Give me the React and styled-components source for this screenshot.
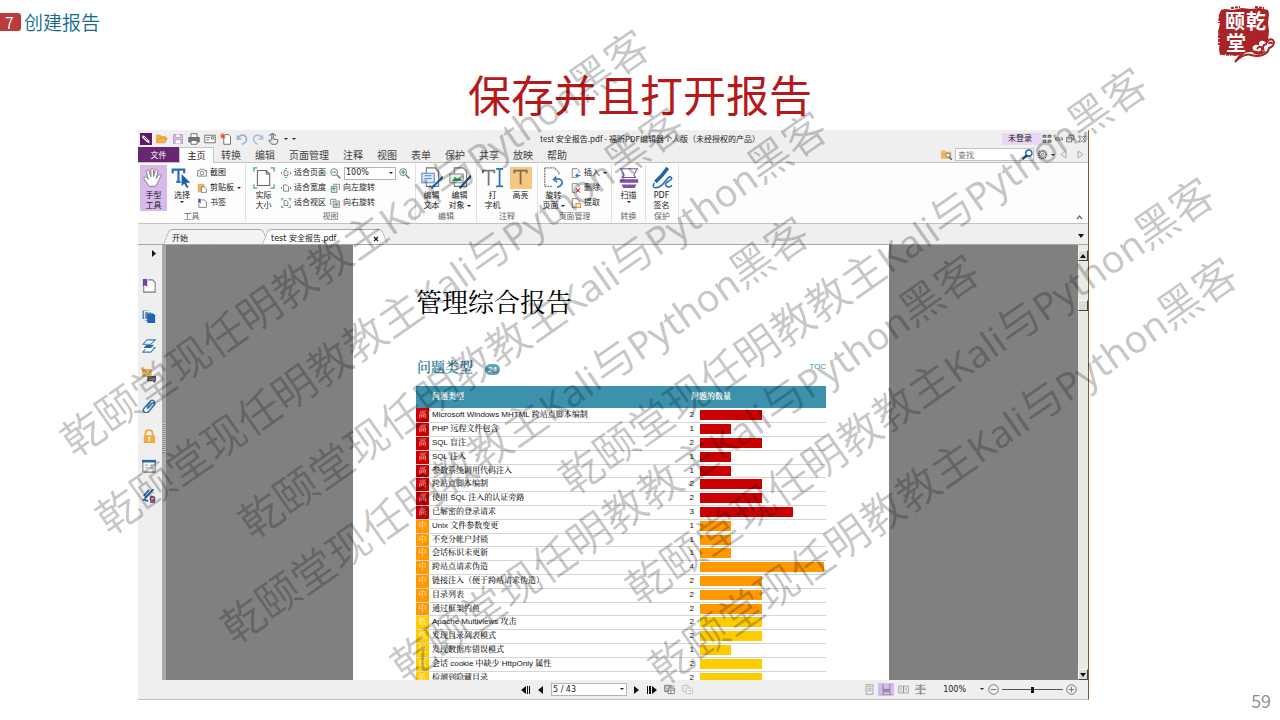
import React from 'react';
import styled, { createGlobalStyle, css } from 'styled-components';

const Global = createGlobalStyle`
  * { box-sizing: border-box; }
  body { margin: 0; background: #fff; }
  button, input, select { font: inherit; color: inherit; margin: 0; padding: 0; border: 0; background: none; border-radius: 0; }
  button, a { cursor: pointer; }
  svg { display: block; flex: none; }
`;

const cjk = '"Noto Sans CJK SC", sans-serif';
const line = '#c3c3c3';

/* ---------- slide ---------- */
const Slide = styled.main`
  position: relative;
  overflow: hidden;
  min-height: 100vh;
  display: flex;
  flex-direction: column;
  font-family: ${cjk};
`;
const SlideHeader = styled.header`
  display: flex;
  justify-content: space-between;
  align-items: flex-start;
  height: 64px;
  padding-right: 4px;
`;
const Chapter = styled.div`
  display: flex;
  align-items: center;
  gap: 3px;
  padding-top: 8px;
  font-size: 19px;
  line-height: 28px;
  font-weight: 350;
  color: #14698c;
`;
const ChapterNumber = styled.span`
  width: 21px;
  height: 18px;
  padding-left: 5px;
  border-radius: 0 3px 3px 0;
  background: #bd3a3a;
  color: #fff;
  font-size: 16px;
  line-height: 18px;
`;
const Title = styled.h1`
  margin: 0;
  height: 66px;
  text-align: center;
  font-size: 43px;
  line-height: 58px;
  font-weight: 400;
  color: #b5191c;
`;
const Stage = styled.div`
  flex: 1;
  display: grid;
  grid-template-columns: 138px minmax(0, 1fr) 191px;
  align-items: start;
`;
const SlideNumber = styled.footer`
  align-self: end;
  padding: 0 9px 7px 0;
  text-align: right;
  font-size: 18px;
  line-height: 26px;
  font-weight: 350;
  color: #8c8c8c;
`;
const Mark = styled.span`
  position: absolute;
  left: calc(50% + ${p => p.$x}px);
  top: ${p => p.$y}px;
  transform: translate(-50%, -50%) rotate(-35deg);
  white-space: nowrap;
  pointer-events: none;
  font-family: ${cjk};
  font-weight: 350;
  font-size: 43px;
  line-height: 60px;
  color: rgba(0, 0, 0, 0.24);
`;
const MarkLatin = styled.span`
  font-family: "Noto Sans", sans-serif;
  font-weight: 400;
  font-size: 38px;
`;

/* ---------- application window ---------- */
const Window = styled.section`
  grid-column: 2;
  display: flex;
  flex-direction: column;
  background: #efefef;
  border-right: 1px solid #7d5a3a;
  border-bottom: 1px solid ${line};
  font-family: "DejaVu Sans", ${cjk};
  font-size: 8px;
  line-height: 10px;
  color: #222;
`;
const TitleBar = styled.div`
  display: flex;
  align-items: center;
  height: 17px;
  padding: 0 2px;
`;
const QuickTools = styled.div`
  display: flex;
  align-items: center;
  gap: 4px;
  width: 158px;
`;
const IconButton = styled.button`
  display: flex;
  align-items: center;
  justify-content: center;
`;
const WindowTitle = styled.div`
  flex: 1;
  text-align: center;
  font-family: ${cjk};
`;
const SignIn = styled.button`
  width: 40px;
  height: 12px;
  padding-left: 6px;
  text-align: left;
  background: #ead6f5;
  white-space: nowrap;
`;
const WindowControls = styled.div`
  display: flex;
  align-items: center;
  gap: 3px;
`;
const MenuBar = styled.div`
  display: flex;
  align-items: stretch;
  height: 16px;
  border-bottom: 1px solid ${line};
  font-family: ${cjk};
  font-size: 10px;
  line-height: 14px;
  color: #444;
`;
const MenuItem = styled.button`
  padding: 0 7px;
  white-space: nowrap;
  ${p => p.$kind === 'file' && css`
    width: 41px;
    background: #6a2673;
    color: #fff;
    font-size: 8px;
  `}
  ${p => p.$kind === 'active' && css`
    width: 35px;
    margin: 0 0 -1px;
    background: #fdfdfd;
    border: 1px solid ${line};
    border-bottom: 0;
    font-size: 9px;
    color: #222;
  `}
`;
const Finder = styled.div`
  display: flex;
  align-items: center;
  gap: 3px;
  margin-left: auto;
  padding-right: 3px;
  font-size: 8px;
`;
const FindBox = styled.label`
  display: flex;
  align-items: center;
  width: 79px;
  height: 13px;
  padding-left: 2px;
  background: #fff;
  border: 1px solid ${line};
  input { flex: 1; min-width: 0; height: 11px; outline: 0; }
  input::placeholder { color: #777; opacity: 1; }
`;
const Caret = styled.span`
  flex: none;
  width: 0;
  height: 0;
  border: 2px solid transparent;
  border-top-color: #222;
  border-bottom-width: 0;
`;

/* ---------- ribbon ---------- */
const Ribbon = styled.div`
  display: flex;
  height: 61px;
  background: #fdfdfd;
  border-bottom: 1px solid ${line};
`;
const Group = styled.fieldset`
  display: flex;
  flex-direction: column;
  flex: none;
  width: ${p => p.$w}px;
  min-width: 0;
  margin: 1px 0;
  padding: 0;
  border: 0;
  border-right: 1px solid #e2e2e2;
`;
const GroupBody = styled.div`
  display: flex;
  gap: ${p => p.$gap || 0}px;
  height: 48px;
  padding-left: ${p => p.$pad || 0}px;
`;
const GroupName = styled.div`
  text-align: center;
  color: #666;
`;
const BigButton = styled.button`
  display: flex;
  flex-direction: column;
  align-items: center;
  width: ${p => p.$w || 27}px;
  height: 46px;
  margin-top: 1px;
  padding-top: 2px;
  white-space: nowrap;
  background: ${p => (p.$on ? '#d7b9ec' : 'none')};
  > svg { margin-bottom: 2px; }
`;
const WithCaret = styled.span`
  display: flex;
  align-items: center;
  gap: 2px;
`;
const Stack = styled.div`
  display: flex;
  flex-direction: column;
  gap: 5px;
  padding-top: 4px;
`;
const SmallButton = styled.button`
  display: flex;
  align-items: center;
  gap: 3px;
  height: 10px;
  white-space: nowrap;
`;
const ZoomLine = styled.div`
  display: flex;
  align-items: center;
  gap: 3px;
  height: 10px;
`;
const Combo = styled.span`
  position: relative;
  width: ${p => p.$w}px;
  height: 13px;
  background: ${p => (p.$plain ? 'none' : '#fff')};
  border: 1px solid ${p => (p.$plain ? 'transparent' : '#b4b4b4')};
  select { display: block; width: 100%; height: 11px; padding-left: 1px; appearance: none; }
  ${Caret} { position: absolute; right: 2px; top: 4px; pointer-events: none; }
`;
const Collapse = styled.button`
  margin: auto 5px 3px auto;
`;

/* ---------- document tabs ---------- */
const DocTabs = styled.div`
  display: flex;
  align-items: flex-end;
  height: 21px;
  padding-left: 28px;
  border-bottom: 1px solid #a8a8a8;
`;
const DocTab = styled.div`
  position: relative;
  z-index: 0;
  display: flex;
  align-items: center;
  justify-content: space-between;
  width: ${p => p.$w}px;
  height: 15px;
  padding: 4px 6px 0 6px;
  &::before, &::after {
    content: '';
    position: absolute;
    z-index: -1;
    top: 0;
    bottom: 0;
    border-top: 1px solid #aaa;
    background: ${p => (p.$active ? '#fdfdfd' : '#f3f3f3')};
  }
  &::before { left: 0; right: 50%; border-left: 1px solid #aaa; border-top-left-radius: 4px; transform: skewX(-22deg); }
  &::after { left: 49%; right: 0; border-right: 1px solid #aaa; border-top-right-radius: 4px; transform: skewX(22deg); }
`;
const TabList = styled.button`
  margin: 0 4px 6px auto;
`;

/* ---------- workspace ---------- */
const Workspace = styled.div`
  display: flex;
  height: 435px;
  background: #808080;
`;
const SideBar = styled.nav`
  display: flex;
  flex-direction: column;
  align-items: center;
  gap: 16px;
  width: 24px;
  padding: 34px 2px 0 0;
  background: #efefef;
  position: relative;
`;
const SideToggle = styled.button`
  position: absolute;
  right: 6px;
  top: 5px;
`;
const Splitter = styled.div`
  display: flex;
  align-items: center;
  width: 4px;
  background: #a9a9a9;
  &::after { content: ''; width: 3px; height: 30px; margin-bottom: 50px; background: repeating-linear-gradient(#c8c8c8 0 1px, #888 1px 2px); }
`;
const Canvas = styled.div`
  flex: 1;
  display: flex;
  justify-content: center;
  padding-right: 102px;
  padding-left: 101px;
  overflow: hidden;
`;
const Paper = styled.article`
  width: 536px;
  margin-right: 1px;
  padding: 37px 63px 0;
  background: #fff;
  overflow: hidden;
  font-family: "Liberation Sans", "Noto Serif CJK SC", ${cjk};
`;
const ReportTitle = styled.h2`
  margin: 0;
  font-size: 26px;
  line-height: 42px;
  font-weight: 400;
  color: #000;
`;
const SectionHead = styled.div`
  display: flex;
  align-items: center;
  height: 20px;
  margin: 33px 0 9px;
  color: #3a91ac;
  a { margin-left: auto; color: inherit; text-decoration: none; }
`;
const SectionTitle = styled.h3`
  margin: 0 12px 0 1px;
  font-size: 14px;
  font-weight: 600;
  line-height: 20px;
  color: #3484a0;
`;
const Total = styled.span`
  width: 15px;
  height: 11px;
  margin-top: 4px;
  border-radius: 6px;
  background: #5ba5bd;
  color: #fff;
  font-weight: 700;
  line-height: 11px;
  text-align: center;
`;
const Issues = styled.table`
  width: 410px;
  border-collapse: collapse;
  table-layout: fixed;
  color: #111;
  font-weight: 500;
  th { height: 22px; padding: 0; background: #3c92ad; color: #fff; text-align: left; font-weight: 700; }
  td { padding: 0; height: 14px; line-height: 10px; border-bottom: 1px solid #d5d5d5; white-space: nowrap; }
  tbody tr:nth-child(5n) td { height: 13px; }
`;
const Col = styled.col`
  width: ${p => p.$w}px;
`;
const Severity = styled.td`
  background: ${p => p.$color};
  color: rgba(255, 255, 255, 0.75);
  text-align: center;
`;
const IssueName = styled.td`
  && { padding-left: 3px; }
`;
const Count = styled.td`
  text-align: right;
`;
const HeadName = styled.th`
  && { padding-left: 3px; }
`;
const HeadCount = styled.th`
  && { padding-left: 7px; }
`;
const Bar = styled.div`
  width: ${p => p.$n * 31}px;
  height: 10px;
  margin-left: 6px;
  background: ${p => p.$color};
`;
const ScrollBar = styled.div`
  display: flex;
  flex-direction: column;
  width: 10px;
  padding-top: 5px;
  background: #ebe9e4;
`;
const ScrollPart = styled.button`
  display: flex;
  align-items: center;
  justify-content: center;
  width: 10px;
  height: 11px;
  margin-top: ${p => p.$top || 0};
  background: #dedad2;
  border: 1px solid #f8f8f8;
  border-right-color: #444;
  border-bottom-color: #444;
`;

/* ---------- status bar ---------- */
const StatusBar = styled.div`
  display: flex;
  align-items: center;
  justify-content: space-between;
  height: 19px;
  padding: 0 11px 0 383px;
`;
const StatusGroup = styled.div`
  display: flex;
  align-items: center;
  gap: ${p => p.$gap}px;
`;
const ViewButton = styled(IconButton)`
  width: 16px;
  height: 13px;
  background: ${p => (p.$on ? '#d9b8f0' : 'none')};
`;
const ZoomSlider = styled.input`
  width: 61px;
  height: 11px;
  appearance: none;
  background: linear-gradient(#555, #555) center / 100% 1px no-repeat;
  &::-webkit-slider-thumb { appearance: none; width: 3px; height: 6px; background: #111; }
`;

/* ---------- drawings ---------- */
const Svg = ({ w = 11, h = w, box = '0 0 16 16', children }) => (
  <svg width={w} height={h} viewBox={box} fill="none" stroke="#666" strokeWidth="1.2" aria-hidden="true">{children}</svg>
);
const Tri = ({ d, w = 6, h = 8, fill = '#111' }) => (
  <svg width={w} height={h} viewBox={`0 0 ${w} ${h}`} fill={fill} aria-hidden="true"><path d={d} /></svg>
);

const art = {
  logo: <><rect width="16" height="16" fill="#5c1a66" stroke="none" /><path d="M3 3l3 1 6 6 1 4-4-2-6-6z" fill="#fff" stroke="none" /><path d="M5 5l5 5" stroke="#5c1a66" /></>,
  open: <path d="M1 13V3h5l1 2h6v3M1 13l3-6h11l-3 6z" fill="#f6b24c" stroke="#e59c35" />,
  save: <><path d="M2 2h12v12H2z" fill="#dcc4e6" stroke="#b893c8" /><path d="M5 2v4h6V2M4 14V9h8v5" fill="#fff" stroke="#b893c8" /></>,
  print: <><path d="M4 6V1h8v5" fill="#fff" /><path d="M1 6h14v6H1z" fill="#6a7680" /><path d="M4 10h8v5H4z" fill="#fff" /></>,
  mail: <><path d="M1 3h14v10H1z" fill="#fff" /><path d="M3 6h5M3 9h4M10 5h3v3h-3z" /></>,
  fresh: <><path d="M5 5v10h9V5l-3-3H8" fill="#fff" /><path d="M4 0v8M0 4h8M1 1l6 6M7 1L1 7" stroke="#d63a2b" /></>,
  undo: <path d="M2 3v5h5M2 8c2-5 8-7 11-3 3 5-1 9-5 10" stroke="#8eb0da" strokeWidth="2" />,
  redo: <path d="M14 3v5H9M14 8c-2-5-8-7-11-3-3 5 1 9 5 10" stroke="#a3bfdf" strokeWidth="2" />,
  touch: <path d="M5 9V2c0-1 2-1 2 0v6l6 1v3l-2 3H5L1 10l2-1 2 2M2 4c0-4 8-4 8 0" stroke="#4b6171" />,
  hand: <path d="M7 22L1 13c0-2 2-2 3-1l2 2L4 5c0-2 2-2 3 0l2 6V3c0-2 3-2 3 0v8l2-7c1-2 3-1 3 1l-2 8 3-4c2-1 3 0 2 2l-4 8-2 3z" fill="#fff" stroke="#777" strokeWidth="1" />,
  select: <><path d="M2 7V3h13v4M8.500 3v14M6 17h5" stroke="#2c6fb5" strokeWidth="2.500" /><path d="M12 8v14l3-3 3 5 2-1-3-5h5z" fill="#1e5fa8" stroke="none" /></>,
  camera: <><path d="M1 4h3l1-2h6l1 2h3v9H1z" /><circle cx="8" cy="8" r="3" /></>,
  paste: <><path d="M2 2h9v12H2z" fill="#f2b456" stroke="#e09b38" /><path d="M7 6h5l3 3v6H7z" fill="#fff" /></>,
  bookmark: <><path d="M7 3h5l3 3v9H3V9" /><path d="M2 1h4v8L4 7 2 9z" fill="#7b3fa0" stroke="none" /></>,
  actual: <><path d="M5 4h10l4 4v13H5z" stroke="#666" /><path d="M15 4v4h4" stroke="#666" /><path d="M1 5V1h4M20 1h4v4M1 20v4h4M20 24h4v-4" stroke="#3fae7e" strokeWidth="1.500" /></>,
  fit: <><path d="M5 4h4l2 2v6H5z" /><path d="M6 2l2-2 2 2M6 14l2 2 2-2M2 6L0 8l2 2M14 6l2 2-2 2" stroke="#35a877" strokeWidth="1.600" /></>,
  fitWidth: <><path d="M4 3h5l3 3v7H4z" /><path d="M2 6L0 8l2 2M14 6l2 2-2 2" stroke="#35a877" strokeWidth="1.600" /></>,
  fitView: <><path d="M5 4h4l2 2v6H5z" /><path d="M1 4V1h3M12 1h3v3M1 12v3h3M12 15h3v-3" stroke="#35a877" strokeWidth="1.600" /></>,
  zoomOut: <><circle cx="6" cy="6" r="5" /><path d="M10 10l5 5" strokeWidth="2" /><path d="M3 6h6" stroke="#35a877" strokeWidth="1.600" /></>,
  zoomIn: <><circle cx="6" cy="6" r="5" /><path d="M10 10l5 5" strokeWidth="2" /><path d="M3 6h6M6 3v6" stroke="#35a877" strokeWidth="1.600" /></>,
  rotLeft: <><path d="M2 5h9v10H2z" fill="#d9e8e0" /><path d="M5 2h10v9" /><path d="M4 9h5M4 9l3-3M4 9l3 3" stroke="#2f9c6c" strokeWidth="1.600" /></>,
  rotRight: <><path d="M5 5h10v10H5z" fill="#d9e8e0" /><path d="M1 11V2h9" /><path d="M7 10h5M12 10L9 7M12 10l-3 3" stroke="#2f9c6c" strokeWidth="1.600" /></>,
  editText: <><path d="M6 1h10l4 4v17H6z" stroke="#777" /><path d="M1 7h14v11H1z" fill="#d9e9f8" stroke="#4e8dc9" /><path d="M4 10h8M4 13h8" stroke="#4e8dc9" /><path d="M25 11L15 21l-3 3" stroke="#1d5ea8" strokeWidth="2.500" /></>,
  editObject: <><path d="M6 1h10l4 4v17H6z" stroke="#777" /><path d="M1 8h15v10H1z" fill="#e6efe9" stroke="#888" /><path d="M3 16l4-5 3 3 2-2 3 4z" fill="#2d9b62" stroke="none" /><path d="M25 10L15 21l-3 3" stroke="#254a7d" strokeWidth="2.500" /></>,
  typewriter: <><path d="M1 7V4h13v3M7.500 4v17" stroke="#777" strokeWidth="2" /><path d="M16 2h3l1 1 1-1h3M20 3v18M16 22h3l1-1 1 1h3" stroke="#2b6fb6" strokeWidth="2" /></>,
  highlight: <><rect width="25" height="25" fill="#f4c883" stroke="none" /><path d="M5 7V4h14v3M12 4v16" stroke="#7c6a4e" strokeWidth="2" /></>,
  rotatePage: <><path d="M2 1h11l5 5v3M2 1v21h9" stroke="#777" strokeWidth="1.500" strokeDasharray="2 1" /><path d="M15 11l-3 3 4 3M13 14c10-3 12 7 3 9" stroke="#3a7cc0" strokeWidth="2" /></>,
  insert: <><path d="M9 15H2V1h8l3 3v4" /><path d="M15 12H9M11 9l-3 3 3 3" stroke="#2b74bf" strokeWidth="2" /></>,
  remove: <><path d="M7 15H2V1h8l3 3v3" /><path d="M8 9l6 6M14 9l-6 6" stroke="#d2322d" strokeWidth="2" /></>,
  extract: <><path d="M7 15H2V1h8l3 3v3" /><path d="M8 9h7v6H8z" fill="#fff" stroke="#e59c35" strokeWidth="2" /></>,
  scan: <><path d="M3 2h19l-4 7 2 3H5l2-3z" stroke="#8350a4" /><path d="M2 14h21v4H2zM4 20h17l-2 4H6z" fill="#8350a4" stroke="none" /></>,
  sign: <><path d="M19 1l-7 9M12 10l-7 7" stroke="#1e61ac" strokeWidth="4" /><path d="M4 18c-5 7 4 7 9 2s7-11 10-8-9 5-6 9 5 1 7 0" stroke="#2b6fb6" strokeWidth="1.800" /></>,
  find: <><circle cx="10" cy="6" r="4.500" stroke="#1d6ab5" strokeWidth="2" /><path d="M7 9l-6 6" stroke="#1b4c87" strokeWidth="3" /></>,
  folderFind: <><path d="M0 2h6l1 2h8v10H0z" fill="#f0b75d" stroke="none" /><circle cx="10" cy="9" r="3" fill="#fff" /><path d="M12 12l4 4" strokeWidth="2" /></>,
  gear: <><circle cx="8" cy="8" r="6" strokeDasharray="2 1.200" strokeWidth="2" /><circle cx="8" cy="8" r="4.500" /><circle cx="8" cy="8" r="1.500" /></>,
  grid: <path d="M2 2h4v3H2zM10 2h4v3h-4zM2 10h4v3H2zM10 10h4v3h-4z" strokeWidth="2" />,
  minimize: <path d="M1 6h14v4H1z" strokeWidth="1.600" />,
  restore: <path d="M1 6h9v8H1zM5 6V2h9v8h-4M3 9h5" strokeWidth="1.600" />,
  close: <path d="M1 2h4l3 3 3-3h4l-4 6 4 6h-4l-3-3-3 3H1l4-6z" strokeWidth="1.600" />,
  pageMark: <><path d="M7 1h5l3 3v11H2V9" fill="#fff" stroke="#777" /><path d="M1 0h5v9L3.500 7 1 9z" fill="#7b3fa0" stroke="none" /></>,
  pages: <><path d="M0 1h8v11H0zM3 3h8v11H3z" fill="#4f87c3" stroke="#efefef" /><path d="M6 5h7l2 2v9H6z" fill="#1e66b0" stroke="none" /></>,
  layers: <><path d="M5 10h10l-5 5H1z" fill="#fff" stroke="#3478b9" /><path d="M5 6h11l-6 5H0z" fill="#1f67b1" stroke="#fff" /><path d="M6 1h9l-5 5H1z" fill="#fff" stroke="#3478b9" /></>,
  comments: <><path d="M0 0h11v9H0z" fill="#edb04f" stroke="none" /><path d="M2 3l3 3 3-3" stroke="#fff" /><path d="M6 8h10v6h-1v2l-3-2H6z" fill="#555" stroke="none" /><path d="M8 10h6M8 12h6" stroke="#bbb" strokeWidth=".7" /></>,
  clip: <path d="M6 11l5-6c2-2 4 0 3 2l-7 8c-3 2-7-1-5-4l7-8c2-3 7-1 5 3M5 9l5-6" stroke="#2a6eb2" strokeWidth="1.600" />,
  lock: <><path d="M4 8V5c0-5 8-5 8 0v3" stroke="#e9a53c" strokeWidth="2" /><rect x="2" y="7" width="13" height="9" rx="1" fill="#edab45" stroke="none" /><path d="M8 9v5M7 10h3" stroke="#fff" /></>,
  form: <><path d="M1 2h14v13H1z" fill="#fff" stroke="#777" /><path d="M0 1h16v3H0z" fill="#1f67b1" stroke="none" /><path d="M3 7h4M9 7h4M3 10h4M9 10h4" stroke="#aaa" /></>,
  signature: <><path d="M13 0L3 11M8 1L2 8M1 13c2-3 3 2 6 0" stroke="#1e61ac" strokeWidth="2" /><circle cx="12" cy="11" r="2.500" fill="#f2cf54" stroke="#79409a" strokeWidth="1.600" /><path d="M10 13v3l2-1 2 1v-3" stroke="#79409a" /></>,
  nextView: <><path d="M1 2h8v9H1z" fill="#ccc" /><path d="M6 6h9v8H6zM6 9h9M10 9v5" fill="#fff" /><path d="M15 3H9M11 1L9 3l2 2" stroke="#2f9c6c" /></>,
  lastView: <><path d="M1 2h8v9H1z" stroke="#bbb" /><path d="M6 6h9v8H6z" fill="#fff" stroke="#bbb" /><path d="M8 10h5M11 8l2 2-2 2" stroke="#94cdb3" /></>,
  single: <path d="M3 1h10v14H3zM5 4h6M5 7h6M5 10h6" stroke="#888" strokeWidth="1" />,
  continuous: <path d="M3 0v8h10V0M1 16h14M3 16v-5h10v5M2 9h12" stroke="#777" />,
  facing: <path d="M1 3h7v10H1zM8 3h7v10H8zM3 6h3M3 9h3M10 6h3M10 9h3" stroke="#888" strokeWidth="1" />,
  facingCont: <path d="M1 2h6v4H1M15 2H9v4h6M0 8h16M1 14h6v-4M15 14H9v-4M8 0v16" stroke="#888" />,
  minus: <><circle cx="8" cy="8" r="7" /><path d="M4 8h8" /></>,
  plus: <><circle cx="8" cy="8" r="7" /><path d="M4 8h8M8 4v8" /></>,
};
const Icon = ({ name, size = 11, box }) => <Svg w={size} box={box}>{art[name]}</Svg>;
const BigIcon = ({ name }) => <Svg w={22} box="0 0 25 25">{art[name]}</Svg>;

const Seal = () => (
  <svg width="60" height="64" viewBox="0 0 60 64" role="img" aria-label="颐乾堂">
    <path d="M5 10l4-1 8 1 9-2 9 1 8-1 9 2 1 4-1 9 1 8-1 10 1 8-4 5-11 1-9-1-10 2-9-2-6 1-1-6 1-8-2-9 2-9-1-8z" fill="#aa2327" />
    <path d="M4 14l-1 9M3 35v10M15 8l9-1M39 7l9 1M6 54l9 1" stroke="#aa2327" strokeWidth="2" strokeDasharray="3 1" />
    <path d="M33 51c-6 0-10 5-14 11 5-5 10-9 16-7 9 3 17-1 18-7 3-1 5-3 5-6-2-5-7-2-7 1-2-5-9-4-9 1-6-1-8 4-5 7z" fill="#fff" stroke="#aa2327" strokeWidth="2" />
    <path d="M41 49c2-4 6-2 5 1s-5 3-7 1M51 44c-4 0-5 4-3 6M37 52c4 3 9 2 12-1M53 44c0-2 3-2 3 0" fill="none" stroke="#aa2327" strokeWidth="2" />
    <g fill="#fff" fontFamily="Noto Sans CJK SC, sans-serif" fontWeight="700">
      <text x="9" y="29" fontSize="20">颐</text>
      <text x="30" y="29" fontSize="20">乾</text>
      <text x="10" y="51" fontSize="20">堂</text>
    </g>
  </svg>
);

/* ---------- data ---------- */
const levels = { 高: '#cb0000', 中: '#ff9900', 低: '#ffcc00' };
const issues = [
  ['高', 'Microsoft Windows MHTML 跨站点脚本编制', 2],
  ['高', 'PHP 远程文件包含', 1],
  ['高', 'SQL 盲注', 2],
  ['高', 'SQL 注入', 1],
  ['高', '参数系统调用代码注入', 1],
  ['高', '跨站点脚本编制', 2],
  ['高', '使用 SQL 注入的认证旁路', 2],
  ['高', '已解密的登录请求', 3],
  ['中', 'Unix 文件参数变更', 1],
  ['中', '不充分帐户封锁', 1],
  ['中', '会话标识未更新', 1],
  ['中', '跨站点请求伪造', 4],
  ['中', '链接注入（便于跨站请求伪造）', 2],
  ['中', '目录列表', 2],
  ['中', '通过框架钓鱼', 2],
  ['低', 'Apache Multiviews 攻击', 2],
  ['低', '发现目录列表模式', 2],
  ['低', '发现数据库错误模式', 1],
  ['低', '会话 cookie 中缺少 HttpOnly 属性', 2],
  ['低', '检测到隐藏目录', 2],
];
const menus = ['转换', '编辑', '页面管理', '注释', '视图', '表单', '保护', '共享', '放映', '帮助'];
const quick = [['logo', '福昕'], ['open', '打开'], ['save', '保存'], ['print', '打印'], ['mail', '邮件'], ['fresh', '新建'], ['undo', '撤销'], ['redo', '重做'], ['touch', '触摸']];
const panels = [['pageMark', '书签'], ['pages', '页面'], ['layers', '图层'], ['comments', '注释'], ['clip', '附件'], ['lock', '安全'], ['form', '表单'], ['signature', '签名']];
const marks = [[-286, 242], [-251, 320], [-108, 324], [-126, 429], [44, 467], [212, 280], [279, 390], [302, 470]];

const Small = ({ icon, children, caret }) => (
  <SmallButton><Icon name={icon} size={10} />{children}{caret && <Caret />}</SmallButton>
);
const RibbonGroup = ({ name, w, pad, gap, children }) => (
  <Group $w={w} aria-label={name}>
    <GroupBody $pad={pad} $gap={gap}>{children}</GroupBody>
    <GroupName>{name}</GroupName>
  </Group>
);
const Big = ({ icon, lines, caret, on, w }) => (
  <BigButton $on={on} $w={w}>
    <BigIcon name={icon} />
    {lines.map((text, i) => (
      <WithCaret key={text}>{text}{caret && i === 1 && <Caret />}</WithCaret>
    ))}
    {caret && lines.length === 1 && <WithCaret><Caret /></WithCaret>}
  </BigButton>
);

function AppRibbon() {
  return (
    <Ribbon>
      <RibbonGroup name="工具" w={108} pad={2}>
        <Big icon="hand" lines={['手型', '工具']} on />
        <Big icon="select" lines={['选择']} caret w={30} />
        <Stack>
          <Small icon="camera">截图</Small>
          <Small icon="paste" caret>剪贴板</Small>
          <Small icon="bookmark">书签</Small>
        </Stack>
      </RibbonGroup>
      <RibbonGroup name="视图" w={170} pad={4} gap={4}>
        <Big icon="actual" lines={['实际', '大小']} />
        <Stack>
          <Small icon="fit">适合页面</Small>
          <Small icon="fitWidth">适合宽度</Small>
          <Small icon="fitView">适合视区</Small>
        </Stack>
        <Stack>
          <ZoomLine>
            <IconButton aria-label="缩小"><Icon name="zoomOut" /></IconButton>
            <Combo $w={52}>
              <select aria-label="缩放"><option>100%</option></select>
              <Caret />
            </Combo>
            <IconButton aria-label="放大"><Icon name="zoomIn" /></IconButton>
          </ZoomLine>
          <Small icon="rotLeft">向左旋转</Small>
          <Small icon="rotRight">向右旋转</Small>
        </Stack>
      </RibbonGroup>
      <RibbonGroup name="编辑" w={61} pad={2} gap={1}>
        <Big icon="editText" lines={['编辑', '文本']} />
        <Big icon="editObject" lines={['编辑', '对象']} caret />
      </RibbonGroup>
      <RibbonGroup name="注释" w={61} pad={2} gap={1}>
        <Big icon="typewriter" lines={['打', '字机']} />
        <Big icon="highlight" lines={['高亮']} />
      </RibbonGroup>
      <RibbonGroup name="页面管理" w={74} pad={2} gap={4}>
        <Big icon="rotatePage" lines={['旋转', '页面']} caret />
        <Stack>
          <Small icon="insert" caret>插入</Small>
          <Small icon="remove">删除</Small>
          <Small icon="extract">提取</Small>
        </Stack>
      </RibbonGroup>
      <RibbonGroup name="转换" w={34} pad={3}>
        <Big icon="scan" lines={['扫描']} caret />
      </RibbonGroup>
      <RibbonGroup name="保护" w={33} pad={2}>
        <Big icon="sign" lines={['PDF', '签名']} />
      </RibbonGroup>
      <Collapse aria-label="折叠功能区"><Svg w={7} h={5} box="0 0 7 5"><path d="M1 4l2.500-3L6 4" /></Svg></Collapse>
    </Ribbon>
  );
}

function Report() {
  return (
    <Paper>
      <ReportTitle>管理综合报告</ReportTitle>
      <SectionHead>
        <SectionTitle>问题类型</SectionTitle>
        <Total>24</Total>
        <a href="#toc">TOC</a>
      </SectionHead>
      <Issues>
        <colgroup><Col $w={13} /><Col $w={255} /><Col $w={10} /><Col $w={132} /></colgroup>
        <thead>
          <tr><th /><HeadName>问题类型</HeadName><HeadCount colSpan={2}>问题的数量</HeadCount></tr>
        </thead>
        <tbody>
          {issues.map(([level, name, n]) => (
            <tr key={name}>
              <Severity $color={levels[level]}>{level}</Severity>
              <IssueName>{name}</IssueName>
              <Count>{n}</Count>
              <td><Bar $n={n} $color={levels[level]} /></td>
            </tr>
          ))}
        </tbody>
      </Issues>
    </Paper>
  );
}

export default function App() {
  return (
    <Slide>
      <Global />
      <SlideHeader>
        <Chapter><ChapterNumber>7</ChapterNumber>创建报告</Chapter>
        <Seal />
      </SlideHeader>
      <Title>保存并且打开报告</Title>
      <Stage>
        <Window>
          <TitleBar>
            <QuickTools>
              {quick.map(([name, label]) => (
                <IconButton key={name} aria-label={label}><Icon name={name} size={12} /></IconButton>
              ))}
              <Caret /><Caret />
            </QuickTools>
            <WindowTitle>test 安全报告.pdf - 福昕PDF编辑器个人版（未经授权的产品）</WindowTitle>
            <SignIn>未登录</SignIn>
            <WindowControls>
              <IconButton aria-label="皮肤"><Icon name="grid" size={10} /></IconButton>
              <IconButton aria-label="最小化"><Icon name="minimize" size={8} /></IconButton>
              <IconButton aria-label="还原"><Icon name="restore" size={9} /></IconButton>
              <IconButton aria-label="关闭"><Icon name="close" size={8} /></IconButton>
            </WindowControls>
          </TitleBar>
          <MenuBar>
            <MenuItem $kind="file">文件</MenuItem>
            <MenuItem $kind="active">主页</MenuItem>
            {menus.map(m => <MenuItem key={m}>{m}</MenuItem>)}
            <Finder>
              <IconButton aria-label="高级查找"><Icon name="folderFind" /></IconButton>
              <FindBox>
                <input aria-label="查找" placeholder="查找" />
                <Icon name="find" />
              </FindBox>
              <IconButton aria-label="设置"><Icon name="gear" /></IconButton>
              <Caret />
              <IconButton aria-label="上一个"><Svg w={13} h={9} box="0 0 13 9"><path d="M8 1v7L3 4.500z" stroke="#aaa" strokeWidth="1" /></Svg></IconButton>
              <IconButton aria-label="下一个"><Svg w={11} h={9} box="0 0 11 9"><path d="M4 1v7l5-3.500z" stroke="#aaa" strokeWidth="1" /></Svg></IconButton>
            </Finder>
          </MenuBar>
          <AppRibbon />
          <DocTabs>
            <DocTab $w={99}>开始</DocTab>
            <DocTab $w={120} $active>test 安全报告.pdf<IconButton aria-label="关闭标签"><Svg w={6} box="0 0 6 6"><path d="M1 1l4 4M5 1L1 5" stroke="#111" /></Svg></IconButton></DocTab>
            <TabList aria-label="标签列表"><Tri w={6} h={4} d="M0 0h6L3 4z" /></TabList>
          </DocTabs>
          <Workspace>
            <SideBar>
              <SideToggle aria-label="展开"><Tri w={4} h={7} d="M0 0l4 3.500L0 7z" /></SideToggle>
              {panels.map(([name, label]) => (
                <IconButton key={name} aria-label={label}><Icon name={name} size={14} /></IconButton>
              ))}
            </SideBar>
            <Splitter />
            <Canvas><Report /></Canvas>
            <ScrollBar>
              <ScrollPart aria-label="向上"><Tri w={6} h={4} d="M0 4h6L3 0z" /></ScrollPart>
              <ScrollPart aria-label="滚动块" $top="39px" />
              <ScrollPart aria-label="向下" $top="auto"><Tri w={6} h={4} d="M0 0h6L3 4z" /></ScrollPart>
            </ScrollBar>
          </Workspace>
          <StatusBar>
            <StatusGroup $gap={7}>
              <IconButton aria-label="首页"><Tri w={10} d="M5 0v8L0 4zM6 0h1v8H6zM8 0h1v8H8z" /></IconButton>
              <IconButton aria-label="上一页"><Tri d="M5 0v8L0 4z" /></IconButton>
              <Combo $w={76}>
                <select aria-label="页码"><option>5 / 43</option></select>
                <Caret />
              </Combo>
              <IconButton aria-label="下一页"><Tri d="M0 0v8l5-4z" /></IconButton>
              <IconButton aria-label="末页"><Tri w={10} d="M5 0v8l5-4zM0 0h1v8H0zM2 0h2v8H2z" /></IconButton>
              <IconButton aria-label="前一视图"><Icon name="nextView" /></IconButton>
              <IconButton aria-label="后一视图"><Icon name="lastView" /></IconButton>
            </StatusGroup>
            <StatusGroup $gap={3}>
              <StatusGroup $gap={1}>
                <ViewButton aria-label="单页"><Icon name="single" /></ViewButton>
                <ViewButton aria-label="连续" $on><Icon name="continuous" /></ViewButton>
                <ViewButton aria-label="对开"><Icon name="facing" /></ViewButton>
                <ViewButton aria-label="连续对开"><Icon name="facingCont" /></ViewButton>
              </StatusGroup>
              <StatusGroup $gap={1}>
                <Combo $w={56} $plain>
                  <select aria-label="显示比例"><option>&nbsp;&nbsp;&nbsp;&nbsp;100%</option></select>
                  <Caret />
                </Combo>
                <IconButton aria-label="缩小"><Icon name="minus" /></IconButton>
              </StatusGroup>
              <ZoomSlider type="range" aria-label="缩放滑块" defaultValue="50" />
              <IconButton aria-label="放大"><Icon name="plus" /></IconButton>
            </StatusGroup>
          </StatusBar>
        </Window>
        <SlideNumber>59</SlideNumber>
      </Stage>
      {marks.map(([x, y]) => (
        <Mark key={`${x},${y}`} $x={x} $y={y} aria-hidden="true">
          乾颐堂现任明教教主<MarkLatin>Kali</MarkLatin>与<MarkLatin>Python</MarkLatin>黑客
        </Mark>
      ))}
    </Slide>
  );
}
